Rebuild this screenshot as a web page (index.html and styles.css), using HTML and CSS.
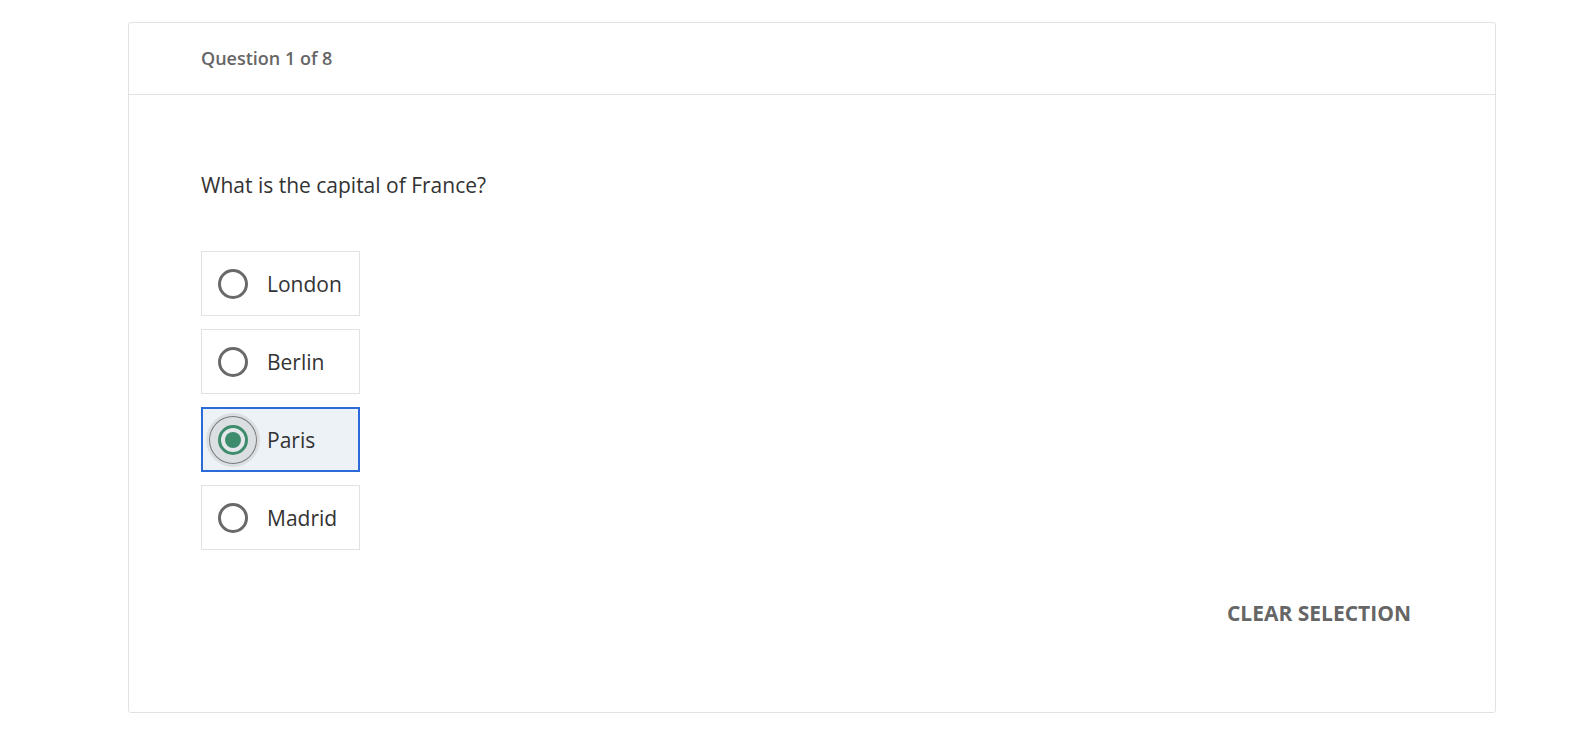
FILE: index.html
```html
<!DOCTYPE html>
<html lang="en">
<head>
<meta charset="utf-8">
<title>Quiz</title>
<link rel="stylesheet" href="styles.css">
</head>
<body>
<main class="card">
  <header class="card-header">
    <span class="progress">Question 1 of 8</span>
  </header>
  <section class="card-body">
    <p class="question">What is the capital of France?</p>
    <div class="options" role="radiogroup">
      <label class="option">
        <span class="radio"></span>
        <span class="option-text">London</span>
      </label>
      <label class="option">
        <span class="radio"></span>
        <span class="option-text">Berlin</span>
      </label>
      <label class="option option-selected">
        <span class="radio radio-checked"><span class="radio-dot"></span></span>
        <span class="option-text">Paris</span>
      </label>
      <label class="option">
        <span class="radio"></span>
        <span class="option-text">Madrid</span>
      </label>
    </div>
    <div class="actions">
      <button class="clear-btn" type="button">CLEAR SELECTION</button>
    </div>
  </section>
</main>
</body>
</html>
```
FILE: styles.css
```css
* { box-sizing: border-box; }

html, body {
  margin: 0;
  padding: 0;
  background: #ffffff;
  font-family: "Open Sans", "Liberation Sans", sans-serif;
}

.card {
  margin: 22px 0 0 128px;
  width: 1368px;
  border: 1px solid #e2e2e2;
  border-radius: 3px;
  background: #fff;
}

.card-header {
  height: 72px;
  border-bottom: 1px solid #e2e2e2;
  display: flex;
  align-items: center;
  padding: 0 72px 2px;
}

.progress {
  font-size: 18px;
  font-weight: 600;
  color: #666666;
  line-height: 24px;
}

.card-body {
  padding: 76px 72px 85px;
}

.question {
  margin: 0 0 52px;
  font-size: 21px;
  line-height: 28px;
  color: #333333;
}

.options {
  display: inline-flex;
  flex-direction: column;
  gap: 13px;
}

.option {
  height: 65px;
  display: flex;
  align-items: center;
  gap: 19px;
  padding: 0 17px 0 16px;
  border: 1px solid #e2e2e2;
  background: #fff;
  cursor: pointer;
}

.option-selected {
  border-color: #2d6ad9;
  box-shadow: inset 0 0 0 1px #2d6ad9;
  background: #edf2f6;
}

.radio {
  flex: none;
  width: 30px;
  height: 30px;
  border: 3px solid #696969;
  border-radius: 50%;
  display: flex;
  align-items: center;
  justify-content: center;
}

.radio-checked {
  border-color: #3e8c6e;
  background: #e4e7ea;
  box-shadow: 0 0 0 8px #dcdfe2, 0 0 0 9px #7a7a7a, 0 0 0 12px #dcdfe2;
}

.radio-dot {
  width: 16px;
  height: 16px;
  border-radius: 50%;
  background: #3e8c6e;
}

.option-text {
  font-size: 21px;
  line-height: 28px;
  color: #333333;
  white-space: nowrap;
}

.actions {
  display: flex;
  justify-content: flex-end;
  margin-top: 49px;
}

.clear-btn {
  font-family: "Open Sans", "Liberation Sans", sans-serif;
  font-size: 21px;
  font-weight: 700;
  line-height: 28px;
  color: #666666;
  background: none;
  border: none;
  padding: 0 12px;
  cursor: pointer;
}
```
